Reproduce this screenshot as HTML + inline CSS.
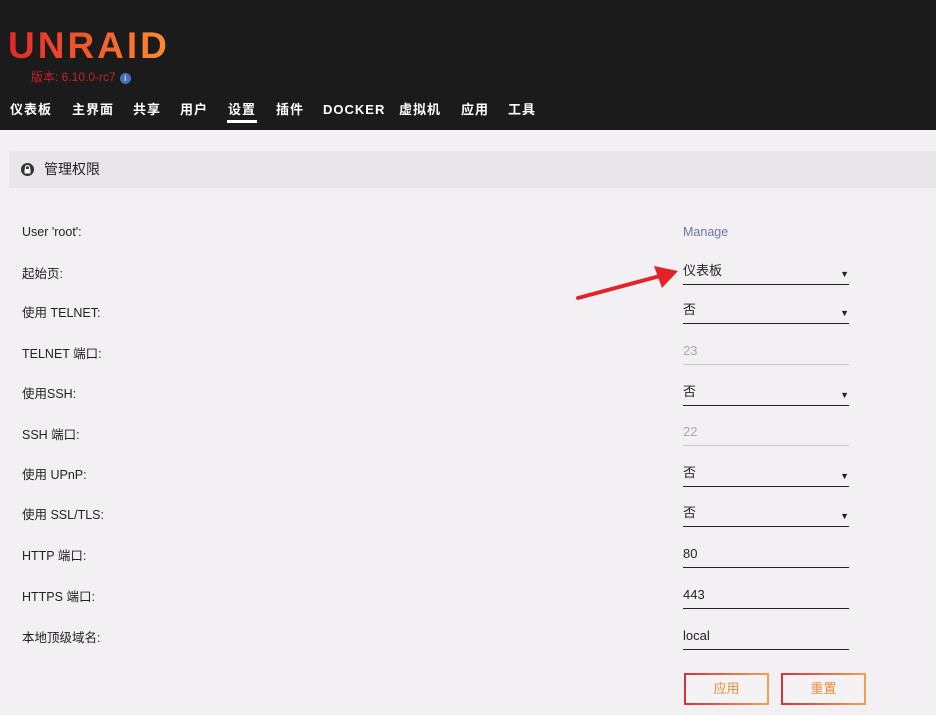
<!DOCTYPE html>
<html><head><meta charset="utf-8"><style>
*{margin:0;padding:0;box-sizing:border-box}
body{width:936px;height:715px;overflow:hidden;background:#f2f0f3;font-family:"Liberation Sans","Noto Sans CJK SC",sans-serif;position:relative;color:#222}
#hd{position:absolute;left:0;top:0;width:936px;height:130px;background:#1c1b1b}
#logo{position:absolute;left:8px;top:25px;font-size:37px;letter-spacing:3px;font-weight:bold;background:linear-gradient(90deg,#e22828,#ff8c2f);-webkit-background-clip:text;color:transparent;line-height:42px}
#ver{position:absolute;left:31px;top:68px;font-size:12px;color:#c0242c}
#ver i{display:inline-block;width:11px;height:11px;border-radius:50%;background:#486dba;color:#fff;font-size:9px;text-align:center;line-height:11px;font-style:normal;margin-left:4px;vertical-align:0}
#nav{position:absolute;top:101px;left:0;font-size:13px;font-weight:bold;color:#fff}
#nav span{position:absolute;top:0;white-space:nowrap;letter-spacing:1px;line-height:18px}
#ul{position:absolute;left:227px;top:120px;width:30px;height:3px;background:#fff}
#sec{position:absolute;left:9px;top:151px;width:927px;height:37px;background:#e8e6e9;font-size:14px;line-height:37px;padding-left:35px;color:#222}
#lock{position:absolute;left:12px;top:12px}
.l{position:absolute;left:22px;font-size:12.5px;color:#222}
.f{position:absolute;left:683px;width:166px;height:22px;border-bottom:1px solid #222;font-size:13px;color:#222;line-height:16px}
.f.d{border-bottom-color:#c8c6ca;color:#aaa}
.f b{position:absolute;right:0;top:3px;font-size:9px}
.bt{position:absolute;top:673px;width:85px;height:32px;border:2px solid #d44;border-image:linear-gradient(90deg,#d8323a,#f0a050) 1;color:#ec8a3a;font-size:13px;text-align:center;line-height:28px;background:#f4f2f4}
</style></head><body>
<div id="hd">
<div id="logo">UNRAID</div>
<div id="ver">版本: 6.10.0-rc7<i>i</i></div>
<div id="nav">
<span style="left:10px">仪表板</span><span style="left:72px">主界面</span><span style="left:133px">共享</span><span style="left:180px">用户</span><span style="left:228px">设置</span><span style="left:276px">插件</span><span style="left:323px">DOCKER</span><span style="left:399px">虚拟机</span><span style="left:461px">应用</span><span style="left:508px">工具</span>
</div>
<div id="ul"></div>
</div>
<div id="sec"><svg id="lock" width="13" height="13" viewBox="0 0 13 13"><circle cx="6.5" cy="6.5" r="6.5" fill="#333"/><rect x="3.5" y="6" width="6" height="4.5" fill="#fff"/><path d="M4.5 6V4.5a2 2 0 0 1 4 0V6" stroke="#fff" stroke-width="1.2" fill="none"/></svg>管理权限</div>
<div class="l" style="top:225px">User 'root':</div><div style="position:absolute;left:683px;top:225px;font-size:12.5px;color:#6a78a0">Manage</div>
<div class="l" style="top:263px">起始页:</div><div class="f" style="top:263px">仪表板<b>▼</b></div>
<div class="l" style="top:302px">使用 TELNET:</div><div class="f" style="top:302px">否<b>▼</b></div>
<div class="l" style="top:343px">TELNET 端口:</div><div class="f d" style="top:343px">23</div>
<div class="l" style="top:383px">使用SSH:</div><div class="f" style="top:384px">否<b>▼</b></div>
<div class="l" style="top:424px">SSH 端口:</div><div class="f d" style="top:424px">22</div>
<div class="l" style="top:464px">使用 UPnP:</div><div class="f" style="top:465px">否<b>▼</b></div>
<div class="l" style="top:504px">使用 SSL/TLS:</div><div class="f" style="top:505px">否<b>▼</b></div>
<div class="l" style="top:545px">HTTP 端口:</div><div class="f" style="top:546px">80</div>
<div class="l" style="top:586px">HTTPS 端口:</div><div class="f" style="top:587px">443</div>
<div class="l" style="top:627px">本地顶级域名:</div><div class="f" style="top:628px">local</div>
<div class="bt" style="left:684px">应用</div>
<div class="bt" style="left:781px">重置</div>
<svg style="position:absolute;left:570px;top:260px" width="115" height="45"><line x1="8" y1="38" x2="90" y2="16" stroke="#e2242a" stroke-width="4" stroke-linecap="round"/><polygon points="108,11 84,6 92,28" fill="#e2242a"/></svg>
</body></html>
